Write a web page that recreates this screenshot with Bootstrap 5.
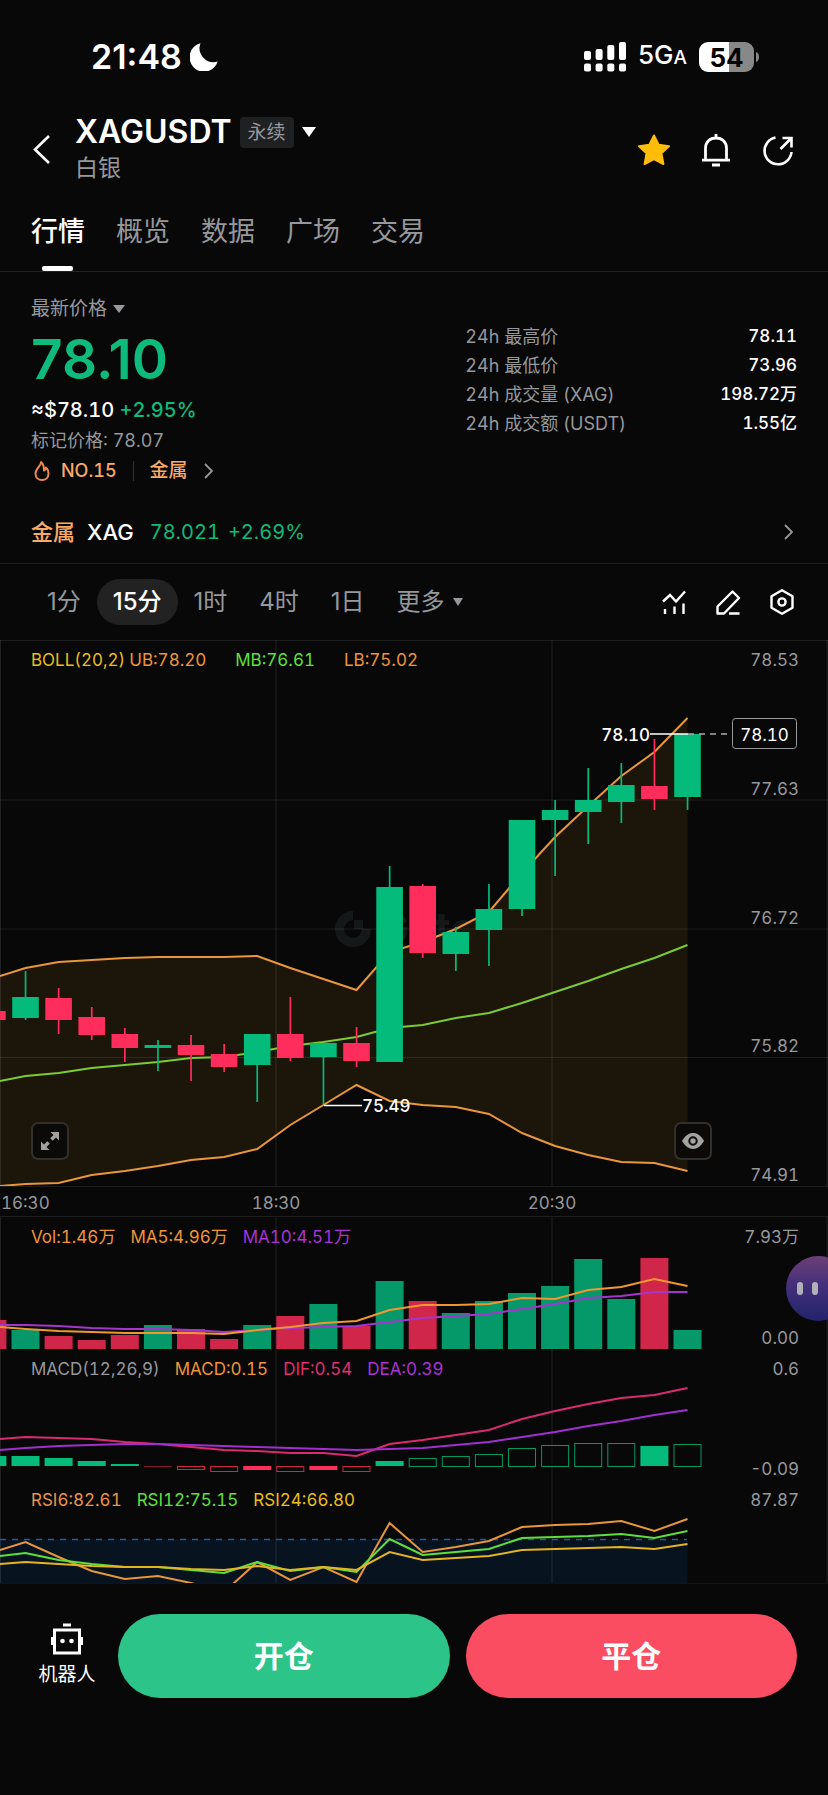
<!DOCTYPE html>
<html lang="zh-CN" data-bs-theme="dark">
<head>
<meta charset="utf-8">
<meta name="viewport" content="width=device-width, initial-scale=1">
<title>XAGUSDT 永续</title>
<link rel="stylesheet" href="https://cdn.jsdelivr.net/npm/bootstrap@5.3.0/dist/css/bootstrap.min.css">
<style>
:root{--up:#0ebb7c;--down:#ff2d5c;--muted:#96989c;--line:#1b1c1d;--amber:#f9a968;--gutter:31px}
body{background:#080808;color:#fff;font-family:Inter,"Noto Sans CJK SC",sans-serif;font-size:18px;line-height:26px;overflow-x:hidden}
svg{display:block;flex:none}
.gutter{padding-left:var(--gutter);padding-right:var(--gutter)}
.soft{color:var(--muted)}
.gain{color:var(--up)}
.amber{color:var(--amber)}
.figures,.pane,.axis{font-variant-numeric:tabular-nums}
.btn{--bs-btn-padding-x:0;--bs-btn-padding-y:0;--bs-btn-border-width:0;--bs-btn-color:#fff;--bs-btn-line-height:inherit}
.status{padding:35px 68px 0 91px;line-height:40px}
.clock{font-size:34px;font-weight:600}
.carrier{font-size:26px;font-weight:500;margin:0 12px}
.carrier small{font-size:19px}
.symbol{margin-top:36px}
.symbol h1{font-size:32px;line-height:36px;font-weight:600}
.symbol p{font-size:23px;line-height:28px;margin-top:4px}
.icons{margin-right:2px}
.kind{background:#1f2022;font-size:19px;line-height:31px;padding:0 8px;border-radius:4px}
.tabs{margin-top:32px;gap:31px;border-bottom:1px solid #222325}
.tabs a{font-size:27px;line-height:36px;padding-bottom:21px;color:var(--muted);text-decoration:none;position:relative}
.tabs a.active{color:#fff;font-weight:500}
.tabs a.active::after{content:"";position:absolute;bottom:0;left:50%;width:31px;height:5px;margin-left:-16px;border-radius:2px;background:#fff}
.label{font-size:19px}
.last{font-size:55px;line-height:54px;font-weight:600;margin:10px 0}
.fiat{font-size:20px;line-height:28px;font-weight:500}
.stats{width:43.3%;padding-top:50px;line-height:29px}
.stats dt{font-weight:400;color:var(--muted)}
.stats dd{font-size:17px;font-weight:500}
.divider{width:1px;height:20px;background:#333}
.spot{font-size:22px;line-height:30px;padding-top:33px;padding-bottom:16px;border-bottom:1px solid var(--line)}
.spot .gain{font-size:20px}
.frames{height:76px}
.frames .btn{font-size:24px;line-height:46px;border-radius:23px;color:var(--muted);padding:0 16px}
.frames .btn.active{background:#222;color:#fff;font-weight:500}
.pane,.axis text,.pane text{font-size:17px}
.pane svg.plot,.axis svg{width:100%;height:auto}
.legend{position:absolute;top:7px;left:var(--gutter);gap:15px}
.band-value{margin-left:29px}
.scale{position:absolute;top:0;bottom:-2px;right:29px;padding-top:7px;color:#96989b}
.tool{position:absolute;bottom:26px;width:38px;height:38px;border:2px solid #33302c!important;border-radius:7px;background:#0b0a08}
.expand{left:31px}
.eye{left:81.4%}
.assistant{position:absolute;top:39px;right:-23px;width:65px;height:65px;border-radius:50%;background:linear-gradient(#6d3f78,#43307a 45%,#22236b);padding-left:11px;gap:9px}
.assistant i{width:6px;height:13px;border-radius:3px;background:#b4b0ba}
.actions{padding:30px 31px 0 38px;gap:16px;border-top:1px solid #121314}
.actions .trade{height:84px;border-radius:42px;font-size:30px;font-weight:600}
.bot{width:58px;font-size:19px;line-height:28px;margin-right:6px;gap:6px}
.bot+.trade{background:#2cc489}
.trade+.trade{background:#fa4d62}
</style>
</head>
<body class="d-flex flex-column min-vh-100">
<header>
  <div class="status d-flex align-items-center">
    <span class="clock">21:48</span>
    <svg class="ms-2" width="28" height="28" viewBox="0 0 28 28" aria-hidden="true"><path fill="#fff" d="M10.5.3A14.4 14.4 0 1 0 27.7 18.600A14 14 0 0 1 10.5.3z"/></svg>
    <svg class="ms-auto" width="42" height="30" viewBox="0 0 42 30" fill="#fff" aria-hidden="true"><rect y="9" width="7" height="9" rx="2"/><rect x="11.600" y="7" width="7" height="11" rx="2"/><rect x="23.300" y="3" width="7" height="15" rx="2"/><rect x="35" width="7" height="18" rx="2"/><rect y="21.500" width="7" height="8" rx="2"/><rect x="11.600" y="21.500" width="7" height="8" rx="2"/><rect x="23.300" y="21.500" width="7" height="8" rx="2"/><rect x="35" y="21.500" width="7" height="8" rx="2"/></svg>
    <span class="carrier">5G<small>A</small></span>
    <svg width="61" height="30" viewBox="0 0 61 30" role="img" aria-label="54%"><defs><clipPath id="cell"><rect width="55" height="30" rx="9"/></clipPath></defs><g clip-path="url(#cell)"><path fill="#fff" d="M0 0h30v30H0z"/><path fill="#888" d="M30 0h25v30H30z"/></g><path fill="#888" d="M57 10c4 1 4 9 0 10z"/><text x="27.500" y="24.500" text-anchor="middle" font-weight="700" font-size="26">54</text></svg>
  </div>
  <div class="symbol gutter d-flex align-items-center">
    <button class="btn" type="button" aria-label="返回"><svg width="20" height="32" viewBox="0 0 20 32" fill="none" stroke="#fff" stroke-width="2.600"><path d="M18 4 4 17.500 18 31"/></svg></button>
    <div class="ms-4">
      <div class="d-flex align-items-center">
        <h1 class="mb-0">XAGUSDT</h1>
        <span class="kind soft ms-2">永续</span>
        <button class="btn ms-2" type="button" aria-label="切换合约"><svg width="14" height="10" viewBox="0 0 14 10"><path fill="#fff" d="M0 0h14L7 10z"/></svg></button>
      </div>
      <p class="soft mb-0">白银</p>
    </div>
    <div class="icons d-flex ms-auto pt-1 gap-4 align-items-center">
      <button class="btn me-1" type="button" aria-label="收藏"><svg width="34" height="34" viewBox="0 0 34 34"><path fill="#ffbd0a" stroke="#ffbd0a" stroke-width="2" stroke-linejoin="round" d="m17 2.500 4.600 9.300 10.400 1.400-7.600 7.100 2 10.700L17 26l-9.400 5 2-10.700L2 13.200l10.400-1.400z"/></svg></button>
      <button class="btn me-1" type="button" aria-label="提醒"><svg width="34" height="34" viewBox="0 0 34 34" fill="none" stroke="#fff" stroke-width="2.800"><path d="M17 1v4M6.500 27V15.500C6.500 9 11 5 17 5s10.500 4 10.500 10.500V27M3 27.200h28M13 32h8"/></svg></button>
      <button class="btn" type="button" aria-label="分享"><svg width="34" height="34" viewBox="0 0 34 34" fill="none" stroke="#fff" stroke-width="2.600"><path d="M14.500 4.500A13.500 13.500 0 1 0 30.500 19M19.500 16 30 5.500M21.500 5H30.500v9.500"/></svg></button>
    </div>
  </div>
  <nav class="tabs gutter d-flex">
    <a class="active" href="#" aria-current="page">行情</a><a href="#">概览</a><a href="#">数据</a><a href="#">广场</a><a href="#">交易</a>
  </nav>
</header>

<main>
  <section class="gutter d-flex justify-content-between">
    <div class="pt-4">
      <button class="btn label soft d-flex align-items-center gap-1" type="button">最新价格<svg width="14" height="8" viewBox="0 0 14 8"><path fill="#96989c" d="M2 0h12L8 8z"/></svg></button>
      <div class="last gain">78.10</div>
      <div class="fiat figures">≈$78.10 <span class="gain">+2.95%</span></div>
      <div class="soft figures mt-1">标记价格: 78.07</div>
      <a class="amber figures d-flex align-items-center text-decoration-none mt-1 fw-medium" href="#">
        <svg width="22" height="22" viewBox="0 0 22 22" fill="none" stroke="#f08a4b" stroke-width="2" stroke-linejoin="round"><path d="M10 2c.6 3.500-5.500 6.500-5.500 11.500 0 4 2.800 6.500 6.500 6.500s6.500-2.500 6.500-6.500c0-2.500-1-4.500-2.500-6-.3 1.500-1 2.500-2 3C13 7 12.500 4 10 2z"/></svg>
        <span class="ms-2">NO.15</span><span class="divider mx-3"></span><span class="label">金属</span>
        <svg class="ms-3" width="9" height="16" viewBox="0 0 9 16" fill="none" stroke="#96989c" stroke-width="1.800"><path d="m1 1 7 7-7 7"/></svg>
      </a>
    </div>
    <dl class="stats figures mb-0">
      <div class="d-flex justify-content-between"><dt>24h 最高价</dt><dd class="mb-0">78.11</dd></div>
      <div class="d-flex justify-content-between"><dt>24h 最低价</dt><dd class="mb-0">73.96</dd></div>
      <div class="d-flex justify-content-between"><dt>24h 成交量 (XAG)</dt><dd class="mb-0">198.72万</dd></div>
      <div class="d-flex justify-content-between"><dt>24h 成交额 (USDT)</dt><dd class="mb-0">1.55亿</dd></div>
    </dl>
  </section>

  <a class="spot gutter d-flex align-items-center text-decoration-none text-white" href="#">
    <span class="amber fw-medium">金属</span><span class="ms-2 ps-1 fw-medium">XAG</span><span class="gain figures ms-3">78.021</span><span class="gain figures ms-2">+2.69%</span>
    <svg class="ms-auto me-1" width="9" height="16" viewBox="0 0 9 16" fill="none" stroke="#96989c" stroke-width="1.800"><path d="m1 1 7 7-7 7"/></svg>
  </a>

  <div class="frames gutter d-flex align-items-center">
    <button class="btn" type="button">1分</button><button class="btn active" type="button">15分</button><button class="btn" type="button">1时</button><button class="btn" type="button">4时</button><button class="btn" type="button">1日</button>
    <button class="btn d-flex align-items-center gap-2" type="button">更多<svg width="10" height="8" viewBox="0 0 10 8"><path fill="#96989c" d="M0 0h10L5 8z"/></svg></button>
    <div class="icons d-flex ms-auto gap-4">
      <button class="btn p-0 me-1" type="button" aria-label="指标"><svg width="26" height="26" viewBox="0 0 26 26" fill="none" stroke="#fff" stroke-width="2.400"><path d="m2 12.500 7-6.500 6 6.500L24 2.500M4 25v-5M13.500 25v-7.500M22.500 25V14.500"/></svg></button>
      <button class="btn p-0 me-1" type="button" aria-label="画线"><svg width="26" height="26" viewBox="0 0 26 26" fill="none" stroke="#fff" stroke-width="2.400" stroke-linejoin="round"><path d="M17.500 2.500 24 9 9 24.500H2.500V17.500zM14 24.500h10.500"/></svg></button>
      <button class="btn p-0" type="button" aria-label="设置"><svg width="26" height="26" viewBox="0 0 26 26" fill="none" stroke="#fff" stroke-width="2.400" stroke-linejoin="round"><path d="m13 1.200 10.500 6v11.600L13 24.800l-10.500-6V7.200z"/><circle cx="13" cy="13" r="3.600"/></svg></button>
    </div>
  </div>

  <section class="pane position-relative">
    <svg class="plot" id="candles" viewBox="0 640 828 546"></svg>
    <div class="legend d-flex gap-0"><span style="color:#e8bd1c">BOLL(20,2)</span><span class="ms-1" style="color:#f0943a">UB:78.20</span><span class="band-value" style="color:#5ee03c">MB:76.61</span><span class="band-value" style="color:#f0943a">LB:75.02</span></div>
    <div class="scale d-flex flex-column justify-content-between text-end"><span>78.53</span><span>77.63</span><span>76.72</span><span>75.82</span><span>74.91</span></div>
    <button class="btn tool expand d-flex align-items-center justify-content-center" type="button" aria-label="全屏"><svg width="18" height="18" viewBox="0 0 18 18" fill="#a3a19d"><path d="M9.500 0H18v8.500l-3-3-3.300 3.300-2.500-2.500L12.500 3zM0 9.500l3 3 3.300-3.300 2.500 2.500L5.500 15l3 3H0z"/></svg></button>
    <button class="btn tool eye d-flex align-items-center justify-content-center" type="button" aria-label="显示"><svg width="22" height="16" viewBox="0 0 22 16"><path fill="#a3a3a3" d="M0 8c6-10.600 16-10.600 22 0-6 10.600-16 10.600-22 0z"/><circle cx="11" cy="8" r="3.700" fill="none" stroke="#0b0a08" stroke-width="2"/></svg></button>
  </section>
  <div class="axis"><svg id="times" viewBox="0 1186 828 31"></svg></div>
  <section class="pane position-relative">
    <svg class="plot" id="volume" viewBox="0 1217 828 132"></svg>
    <div class="legend d-flex"><span style="color:#f0943a">Vol:1.46万</span><span style="color:#f0943a">MA5:4.96万</span><span style="color:#a933d6">MA10:4.51万</span></div>
    <div class="scale d-flex flex-column justify-content-between text-end"><span>7.93万</span><span>0.00</span></div>
    <button class="assistant btn d-flex align-items-center" type="button" aria-label="助手"><i></i><i></i></button>
  </section>
  <section class="pane position-relative">
    <svg class="plot" id="macd" viewBox="0 1349 828 131"></svg>
    <div class="legend d-flex"><span class="soft">MACD(12,26,9)</span><span style="color:#f0943a">MACD:0.15</span><span style="color:#e02f72">DIF:0.54</span><span style="color:#a933d6">DEA:0.39</span></div>
    <div class="scale d-flex flex-column justify-content-between text-end"><span>0.6</span><span>-0.09</span></div>
  </section>
  <section class="pane position-relative">
    <svg class="plot" id="rsi" viewBox="0 1480 828 103"></svg>
    <div class="legend d-flex"><span style="color:#e8944a">RSI6:82.61</span><span style="color:#5ee03c">RSI12:75.15</span><span style="color:#e8bd1c">RSI24:66.80</span></div>
    <div class="scale text-end"><span>87.87</span></div>
  </section>
</main>

<footer class="actions d-flex align-items-center">
  <button class="btn bot d-flex flex-column align-items-center text-nowrap" type="button">
    <svg width="32" height="32" viewBox="0 0 32 32" fill="none" stroke="#fff" stroke-width="3"><path d="M12 2h8M3.500 7h25v23h-25zM1.500 14v8M30.500 14v8"/><circle cx="11.500" cy="18" r="2.300" fill="#fff" stroke="none"/><circle cx="20.500" cy="18" r="2.300" fill="#fff" stroke="none"/></svg>
    <span>机器人</span>
  </button>
  <button class="btn trade flex-fill" type="button">开仓</button>
  <button class="btn trade flex-fill" type="button">平仓</button>
</footer>

<script src="https://cdn.jsdelivr.net/npm/bootstrap@5.3.0/dist/js/bootstrap.bundle.min.js"></script>
<script>
const UP = '#05bb7b', DOWN = '#ff2d5c';
const cx = i => 25.5 + 33.1 * i;
const put = (id, html) => document.getElementById(id).innerHTML = html;
const rect = (x, y, w, h, a) => `<rect x="${x}" y="${y}" width="${w}" height="${h}" ${a}/>`;
// The first value of a series is its height at the left edge, the others are one per candle.
const pts = s => s.map((y, k) => (k ? cx(k - 1) : 0) + ',' + y);
const curve = (s, c) => `<polyline points="${pts(s).join(' ')}" fill="none" stroke="${c}" stroke-width="2"/>`;
const grid = (t, b) => `<path d="M.5 ${t}V${b}M276 ${t}V${b}M552 ${t}V${b}M827 ${t}V${b}" stroke="#fff" stroke-opacity=".1"/>`;
const rule = y => `<path d="M0 ${y}H828" stroke="#fff" stroke-opacity=".09"/>`;

// direction, body top, body bottom, wick top, wick bottom
const bars = [[0,1011,1020,1011,1020],[1,997,1018,971,1020],[0,998,1020,988,1034],[0,1017,1035,1007,1040],[0,1034,1048,1028,1062],[1,1045,1048,1040,1071],[0,1045,1055,1035,1081],[0,1054,1067,1044,1072],[1,1034,1065,1034,1102],[0,1034,1058,997,1061],[1,1043,1057,1043,1104],[0,1043,1061,1027,1067],[1,887,1062,866,1062],[0,886,953,884,958],[1,932,954,927,971],[1,909,930,884,966],[1,820,909,820,916],[1,810,820,800,876],[1,800,812,768,844],[1,785,802,763,823],[0,786,799,739,810],[1,734,797,734,810]];
const ub = [976,968,962,960,958,957,957,957,956,968,979,990,952,942,929,912,873,837,806,776,752,718];
const mb = [1081,1076,1073,1068,1065,1062,1058,1057,1052,1046,1042,1037,1028,1025,1018,1013,1003,992,981,969,958,945];
const lb = [1186,1184,1183,1175,1171,1166,1160,1157,1149,1125,1105,1085,1101,1105,1107,1114,1133,1146,1155,1162,1163,1171];
const band = `<polygon points="${pts(ub).concat(pts(lb).reverse()).join(' ')}" fill="#1e160a" fill-opacity=".94"/>`;
const watermark = `<g fill="#151819"><path d="M353 911a18 18 0 1 0 18 18h-9a9 9 0 1 1-9-9z"/><path d="M354 920h9v9h-9z"/><text x="376" y="944" font-weight="700" style="font-size:44px">Gate</text></g>`;
const candles = bars.map(([u, a, b, t, w], k) => {
  const x = cx(k - 1), c = `fill="${u ? UP : DOWN}"`;
  return rect(x - 13.3, a, 26.6, b - a, c) + rect(x - .8, t, 1.7, w - t, c);
}).join('');
const marks = `<path d="M650 734H688M324 1105.500H362" stroke="#fff" stroke-width="1.600"/><path d="M688 734H732" stroke="#aaa" stroke-width="1.400" stroke-dasharray="6 5"/>
<g fill="#fff"><text x="650" y="740.500" text-anchor="end" font-weight="500">78.10</text><text x="362" y="1112" font-weight="500">75.49</text></g>
<rect x="732.500" y="718.500" width="64" height="30" rx="3" fill="#080808" stroke="#98999b"/><text x="764.500" y="740.500" fill="#fff" text-anchor="middle">78.10</text>`;
put('candles', watermark + band + grid(640, 1186) + [640.5, 800, 929, 1057.5].map(rule).join('')
  + curve(ub, '#e9973a') + curve(mb, '#7ccb35') + curve(lb, '#e9973a') + candles + marks);

put('times', rule(1186.5) + rule(1216.5) + '<g fill="#96989b"><text x="1" y="1209">16:30</text><text x="276" y="1209" text-anchor="middle">18:30</text><text x="552" y="1209" text-anchor="middle">20:30</text></g>');

const vol = [1320,1330,1336,1340,1335,1325,1329,1339,1325,1316,1304,1326,1281,1301,1313,1301,1293,1286,1259,1299,1258,1330];
put('volume', grid(1217, 1349) + vol.map((y, k) => rect(cx(k - 1) - 14, y, 28, 1349 - y, `fill="${bars[k][0] ? '#059868' : '#cf264a'}"`)).join('')
  + curve([1325,1325,1326,1328,1329,1329,1330,1332,1330,1328,1327,1326,1322,1318,1316,1314,1309,1304,1298,1296,1292,1292], '#a535cf')
  + curve([1327,1329,1331,1332,1333,1333,1333,1334,1330,1327,1323,1321,1310,1305,1305,1304,1298,1299,1290,1287,1279,1286], '#f0982f'));

// far end of each histogram bar from the zero line, and whether it is hollow
const hist = [[1456],[1456],[1458],[1461],[1464],[1466.5],[1469,1],[1471,1],[1470],[1471,1],[1470],[1471,1],[1461],[1458,1],[1456,1],[1454,1],[1448,1],[1445,1],[1443,1],[1443,1],[1446],[1444,1]];
put('macd', grid(1349, 1480) + hist.map(([y, hollow], k) => {
  const c = y < 1466 ? UP : DOWN, x = cx(k - 1) - 14, t = Math.min(y, 1466), h = Math.abs(1466 - y);
  return hollow ? rect(x + .5, t + .5, 27, h, `fill="#080808" fill-opacity=".5" stroke="${c}" stroke-opacity=".8"`) : rect(x, t, 28, h, `fill="${c}"`);
}).join('')
  + curve([1439,1437,1438,1439,1442,1444,1447,1450,1451,1453,1453,1456,1444,1440,1435,1430,1419,1411,1404,1398,1395,1388], '#d92c70')
  + curve([1450,1448,1446,1445,1444,1444,1445,1446,1447,1448,1449,1450,1449,1448,1445,1442,1437,1432,1426,1421,1415,1410], '#a02fd0'));

put('rsi', rect(0, 1539, 687.5, 44, 'fill="#07131f"') + grid(1480, 1583) + '<path d="M0 1539.500H687" stroke="#2c579f" stroke-width="1.500" stroke-dasharray="6 6"/>'
  + curve([1550,1542,1557,1571,1579,1576,1583,1592,1562,1580,1567,1582,1523,1552,1547,1541,1527,1525,1524,1521,1531,1519], '#e8963c')
  + curve([1556,1553,1560,1564,1567,1567,1570,1573,1562,1571,1567,1572,1539,1555,1552,1549,1538,1537,1536,1534,1538,1531], '#5ee03c')
  + curve([1564,1562,1564,1566,1567,1567,1569,1570,1566,1570,1567,1570,1552,1560,1558,1556,1550,1549,1548,1547,1549,1544], '#e6b422'));
</script>
</body>
</html>
